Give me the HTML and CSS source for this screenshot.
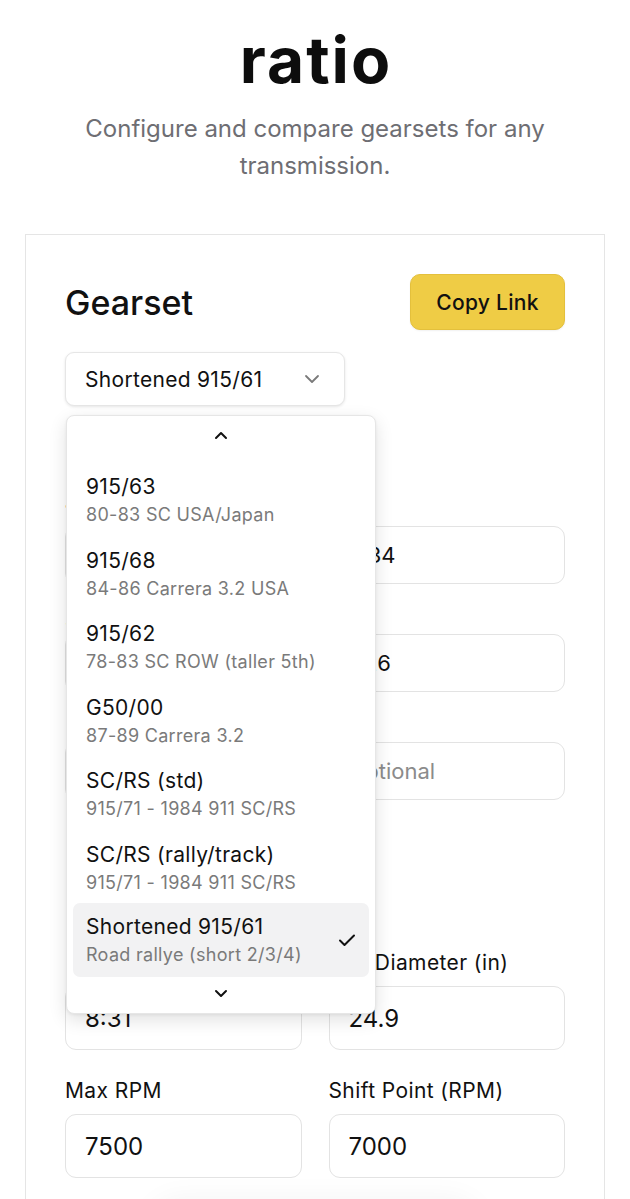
FILE: index.html
```html
<!DOCTYPE html>
<html lang="en">
<head>
<meta charset="utf-8">
<title>ratio</title>
<link rel="stylesheet" href="styles.css">
</head>
<body>
<header class="hero">
  <h1 class="hero-title">ratio</h1>
  <p class="hero-sub">Configure and compare gearsets for any transmission.</p>
</header>

<main class="card">
  <div class="card-head">
    <h2 class="card-title">Gearset</h2>
    <button class="copy-btn" type="button">Copy Link</button>
  </div>

  <div class="select-wrap">
    <button class="select" type="button">
      <span>Shortened 915/61</span>
      <svg class="select-chev" width="16" height="10" viewBox="0 0 16 10"><path d="M2 2l6 6 6-6" fill="none" stroke="#7a7a7a" stroke-width="1.8" stroke-linecap="round" stroke-linejoin="round"/></svg>
    </button>

    <div class="listbox" role="listbox">
      <div class="scroll-btn scroll-up">
        <svg width="16" height="10" viewBox="0 0 16 10"><path d="M3 8l5-5 5 5" fill="none" stroke="#111" stroke-width="2" stroke-linecap="round" stroke-linejoin="round"/></svg>
      </div>
      <div class="options">
        <div class="option"><div class="opt-title">915/63</div><div class="opt-sub">80-83 SC USA/Japan</div></div>
        <div class="option"><div class="opt-title">915/68</div><div class="opt-sub">84-86 Carrera 3.2 USA</div></div>
        <div class="option"><div class="opt-title">915/62</div><div class="opt-sub">78-83 SC ROW (taller 5th)</div></div>
        <div class="option"><div class="opt-title">G50/00</div><div class="opt-sub">87-89 Carrera 3.2</div></div>
        <div class="option"><div class="opt-title">SC/RS (std)</div><div class="opt-sub">915/71 - 1984 911 SC/RS</div></div>
        <div class="option"><div class="opt-title">SC/RS (rally/track)</div><div class="opt-sub">915/71 - 1984 911 SC/RS</div></div>
        <div class="option selected">
          <div class="opt-text"><div class="opt-title">Shortened 915/61</div><div class="opt-sub">Road rallye (short 2/3/4)</div></div>
          <svg class="check" width="20" height="16" viewBox="0 0 20 16"><path d="M3 8.5l4.5 4.5L17 3.5" fill="none" stroke="#111" stroke-width="2" stroke-linecap="round" stroke-linejoin="round"/></svg>
        </div>
      </div>
      <div class="scroll-btn scroll-down">
        <svg width="16" height="10" viewBox="0 0 16 10"><path d="M3 2l5 5 5-5" fill="none" stroke="#111" stroke-width="2" stroke-linecap="round" stroke-linejoin="round"/></svg>
      </div>
    </div>
  </div>

  <section class="ratios">
    <div class="field"><label class="lbl">1st</label><input class="inp inp-sm" value="3.18"></div>
    <div class="field"><label class="lbl">2nd</label><input class="inp inp-sm" value="2.34"></div>
    <div class="field"><label class="lbl">3rd</label><input class="inp inp-sm" value="1.61"></div>
    <div class="field"><label class="lbl">4th</label><input class="inp inp-sm" value="1.26"></div>
    <div class="field"><label class="lbl">5th</label><input class="inp inp-sm" value="0.96"></div>
    <div class="field"><label class="lbl">6th</label><input class="inp inp-sm" placeholder="Optional"></div>
  </section>

  <section class="drive">
    <div class="field"><label class="lbl lbl-lg">Final Drive</label><input class="inp inp-lg" value="8:31"></div>
    <div class="field"><label class="lbl lbl-lg">Tire Diameter (in)</label><input class="inp inp-lg" value="24.9"></div>
    <div class="field"><label class="lbl lbl-lg">Max RPM</label><input class="inp inp-lg" value="7500"></div>
    <div class="field"><label class="lbl lbl-lg">Shift Point (RPM)</label><input class="inp inp-lg" value="7000"></div>
  </section>

  <div class="below"></div>
</main>
</body>
</html>
```

FILE: styles.css
```css
* { box-sizing: border-box; }

html, body {
  margin: 0;
  padding: 0;
  background: #ffffff;
}

body {
  font-family: Inter, "Noto Sans", "Liberation Sans", sans-serif;
  color: #111111;
  overflow: hidden;
}

.hero {
  text-align: center;
  padding-top: 28px;
}

.hero-title {
  margin: 0;
  font-size: 64px;
  line-height: 64px;
  font-weight: 700;
  letter-spacing: 2px;
  text-indent: 2px;
  color: #0d0d0d;
}

.hero-sub {
  margin: 18px auto 0;
  max-width: 480px;
  font-size: 24px;
  line-height: 37px;
  color: #6e6e73;
}

.card {
  margin: 50px 25px 0;
  border: 1px solid #e5e5e5;
  padding: 39px 39px 60px;
}

.card-head {
  display: flex;
  align-items: center;
  justify-content: space-between;
  height: 56px;
}

.card-title {
  margin: 0;
  font-size: 34px;
  font-weight: 500;
  letter-spacing: 0;
}

.copy-btn {
  width: 155px;
  height: 56px;
  border: 1px solid #e4c03c;
  border-radius: 10px;
  background: #efcc45;
  font-family: inherit;
  font-size: 21px;
  font-weight: 500;
  letter-spacing: 0.3px;
  color: #111;
  box-shadow: 0 1px 2px rgba(0,0,0,0.06);
}

.select-wrap {
  position: relative;
  margin-top: 22px;
}

.select {
  display: flex;
  align-items: center;
  justify-content: space-between;
  width: 280px;
  height: 54px;
  padding: 0 24px 0 19px;
  border: 1px solid #e6e6e6;
  border-radius: 9px;
  background: #fff;
  box-shadow: 0 1px 3px rgba(0,0,0,0.10);
  font-family: inherit;
  font-size: 21px;
  letter-spacing: 0.3px;
  color: #111;
}

.listbox {
  position: absolute;
  top: 63px;
  left: 1px;
  width: 310px;
  z-index: 5;
  background: #fff;
  border: 1px solid #e6e6e6;
  border-radius: 8px;
  padding: 6px;
  box-shadow: 0 6px 18px rgba(0,0,0,0.12), 0 1px 3px rgba(0,0,0,0.06);
}

.scroll-btn {
  display: flex;
  justify-content: center;
}

.scroll-up {
  height: 26px;
  align-items: center;
}

.options {
  padding-top: 14px;
}

.option {
  height: 73.5px;
  padding: 11px 13px 0;
}

.option.selected {
  display: flex;
  align-items: center;
  justify-content: space-between;
  padding: 0 12px 0 13px;
  background: #f2f2f3;
  border-radius: 7px;
}

.opt-title {
  font-size: 21px;
  line-height: 28px;
  letter-spacing: 0.3px;
  color: #111;
}

.opt-sub {
  margin-top: 2px;
  font-size: 18px;
  line-height: 24px;
  color: #7a7a7a;
  letter-spacing: 0.3px;
}

.scroll-down {
  height: 30px;
  align-items: flex-end;
  padding-bottom: 8px;
}

.ratios,
.drive {
  display: grid;
  grid-template-columns: 1fr 1fr;
  column-gap: 27px;
}

.ratios {
  margin-top: 94px;
  row-gap: 24px;
}

.drive {
  margin-top: 151px;
  row-gap: 29px;
}

.field {
  display: flex;
  flex-direction: column;
}

.lbl {
  font-size: 21px;
  line-height: 24px;
  letter-spacing: 0.4px;
  margin-bottom: 2px;
  color: #111;
}

.lbl-lg {
  margin-bottom: 11px;
}

.inp {
  width: 100%;
  border: 1px solid #e3e3e3;
  border-radius: 11px;
  background: #fff;
  font-family: inherit;
  color: #111;
  outline: none;
}

.inp::placeholder {
  color: #8b8b8b;
}

.inp-sm {
  height: 58px;
  padding: 0 19px;
  font-size: 22px;
}

.inp-lg {
  height: 64px;
  padding: 0 19px;
  font-size: 24px;
}

.below {
  margin: 22px auto 0;
  width: 330px;
  height: 60px;
  border-radius: 30px;
  box-shadow: 0 0 30px rgba(0,0,0,0.05);
}
```
